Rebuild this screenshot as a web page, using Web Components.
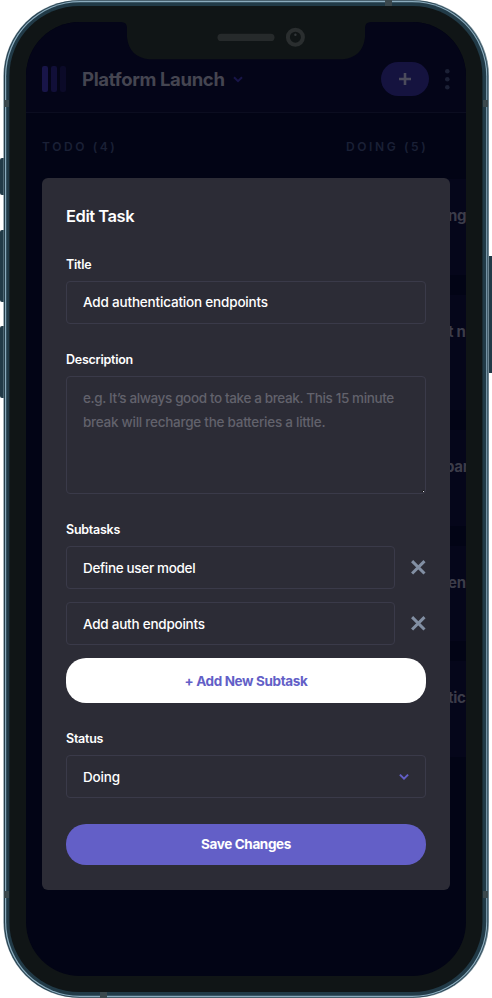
<!DOCTYPE html>
<html lang="en">
<head>
<meta charset="utf-8">
<title>Edit Task</title>
<style>
html,body{margin:0;background:#fff;overflow:hidden}
body{font-family:Inter,"Open Sans",sans-serif;-webkit-font-smoothing:antialiased}
</style>
</head>
<body>
<phone-frame>
  <app-header slot="app">Platform Launch</app-header>
  <board-columns slot="app">
    <board-column name="TODO (4)"></board-column>
    <board-column name="DOING (5)">
      <task-card h="96">ng</task-card>
      <task-card h="115">t n</task-card>
      <task-card h="96" style="padding-left:99px">par</task-card>
      <task-card h="95">en</task-card>
      <task-card h="96">tica</task-card>
    </board-column>
  </board-columns>
  <task-dialog slot="modal" heading="Edit Task">
    <form-field label="Title" style="margin-top:25.5px"><text-box style="letter-spacing:-.18px">Add authentication endpoints</text-box></form-field>
    <form-field label="Description" style="margin-top:27.5px"><text-box multiline><div style="letter-spacing:-.37px">e.g. It’s always good to take a break. This 15 minute</div><div style="letter-spacing:-.26px">break will recharge the batteries a little.</div></text-box></form-field>
    <form-field label="Subtasks" style="margin-top:27px">
      <subtask-row><text-box style="letter-spacing:-.33px">Define user model</text-box></subtask-row>
      <subtask-row><text-box style="letter-spacing:-.24px">Add auth endpoints</text-box></subtask-row>
      <pill-button style="--h:45px;--bg:#fff;--fg:#635fc7">+ Add New Subtask</pill-button>
    </form-field>
    <form-field label="Status" style="margin-top:27px"><text-box dropdown style="letter-spacing:-.15px">Doing</text-box></form-field>
    <pill-button style="margin-top:25.5px;--h:41px;--bg:#635fc7;--fg:#fff">Save Changes</pill-button>
  </task-dialog>
</phone-frame>
<script>
const define = (name, html, setup) => customElements.define(name, class extends HTMLElement {
  connectedCallback() {
    if (this.shadowRoot) return;
    const root = this.attachShadow({ mode: 'open' });
    const t = document.createElement('template');
    t.innerHTML = html;
    root.append(t.content.cloneNode(true));
    if (setup) setup(this, root);
  }
});

define('phone-frame', `
<style>
:host{display:block;position:relative;width:492px;height:998px;overflow:hidden}
svg{position:absolute;inset:0;display:block}
.screen{position:absolute;left:26px;top:22px;width:440px;height:954px;border-radius:54px;overflow:hidden;background:#020415}
.modal{position:absolute;left:16px;top:156px}
</style>
<svg width="492" height="998" viewBox="0 0 492 998">
  <g fill="#213a47">
    <rect x="0" y="158" width="8" height="37" rx="2"/>
    <rect x="0" y="230" width="8" height="72" rx="2"/>
    <rect x="0" y="326" width="8" height="72" rx="2"/>
    <rect x="484" y="256" width="12" height="117" rx="2"/>
  </g>
  <rect x="3.4" y="0" width="485.6" height="998" rx="76" fill="#6d8592"/>
  <rect x="4" y=".4" width="484" height="997.2" rx="75.5" fill="#243d4a"/>
  <rect x="5" y="1" width="482.3" height="996" rx="75" fill="#8aabbd"/>
  <rect x="6.2" y="2.2" width="480" height="993.6" rx="74" fill="#213a47"/>
  <g fill="#3b484d">
    <rect x="4" y="100" width="5" height="7"/><rect x="483" y="100" width="5" height="7"/>
    <rect x="4" y="891" width="5" height="7"/><rect x="483" y="891" width="5" height="7"/>
    <rect x="385" y="0" width="7" height="6"/><rect x="100" y="992" width="7" height="6"/>
  </g>
  <rect x="9.4" y="6" width="473" height="986" rx="70" fill="#101516"/>
</svg>
<div class="screen"><slot name="app"></slot><div class="modal"><slot name="modal"></slot></div></div>
<svg width="492" height="60" viewBox="0 0 492 60">
  <path fill="#101516" d="M121 20V22Q127 22 127 28V37Q129 57 149 59.3H343Q363 57 365 37V28Q365 22 371 22V20Z"/>
  <rect x="217.5" y="33.8" width="57" height="7.2" rx="3.6" fill="#262a2b"/>
  <circle cx="295.4" cy="37.2" r="7.5" fill="none" stroke="#2a2e2f" stroke-width="4"/>
  <circle cx="295.4" cy="34.8" r="1.2" fill="#33383a"/>
</svg>`);

define('app-header', `
<style>
:host{display:flex;box-sizing:border-box;height:91px;padding:24px 16px 0;align-items:center;background:#040518;border-bottom:1px solid #0b0d20;color:#454551}
.title{font-size:18.5px;font-weight:700;line-height:24px;letter-spacing:-.35px;margin-left:16px;white-space:nowrap}
.chev{margin-left:8px}
.add{margin-left:auto;width:48px;height:34px;border-radius:17px;background:#15133f;display:grid;place-items:center}
.dots{margin-left:16px}
svg{display:block}
</style>
<svg width="24" height="26"><rect width="6" height="26" rx="2" fill="#181548"/><rect x="9" width="6" height="26" rx="2" fill="#110f38"/><rect x="18" width="6" height="26" rx="2" fill="#0b0a28"/></svg>
<span class="title"><slot></slot></span>
<svg class="chev" width="10" height="7"><path d="M1 1.2l4 4 4-4" fill="none" stroke="#181548" stroke-width="2"/></svg>
<span class="add"><svg width="12" height="12"><path d="M6 0v12M0 6h12" stroke="#4c4b5c" stroke-width="2.6"/></svg></span>
<svg class="dots" width="5" height="21" fill="#1c2136"><circle cx="2.3" cy="2.3" r="2.3"/><circle cx="2.3" cy="10.3" r="2.3"/><circle cx="2.3" cy="18.3" r="2.3"/></svg>`);

define('board-columns', `
<style>:host{display:flex;gap:24px;padding:25px 16px 0}</style><slot></slot>`);

define('board-column', `
<style>
:host{display:flex;flex-direction:column;flex:0 0 280px;gap:20px}
.name{font-size:12px;font-weight:600;line-height:18px;letter-spacing:2.6px;color:#1a2036;white-space:nowrap;margin-bottom:3px}
</style>
<span class="name"></span><slot></slot>`, (el, r) => r.querySelector('.name').textContent = el.getAttribute('name'));

define('task-card', `
<style>
:host{display:block;box-sizing:border-box;padding:27px 0 0 102px;border-radius:8px;background:#05061a;color:#3c3c49;font-size:15px;font-weight:700;line-height:20px;letter-spacing:-.3px;white-space:nowrap}
</style><slot></slot>`, el => el.style.height = el.getAttribute('h') + 'px');

define('task-dialog', `
<style>
:host{display:flex;flex-direction:column;box-sizing:border-box;width:408px;height:712px;padding:24px;border-radius:6px;background:#2c2c36;color:#fff}
h2{margin:0;font-size:16.5px;font-weight:600;line-height:28px;letter-spacing:-.45px}
</style>
<h2></h2><slot></slot>`, (el, r) => r.querySelector('h2').textContent = el.getAttribute('heading'));

define('form-field', `
<style>
:host{display:flex;flex-direction:column}
.label{font-size:12.5px;font-weight:600;line-height:17px;letter-spacing:-.25px;margin-bottom:8px}
.body{display:flex;flex-direction:column;gap:13px}
</style>
<span class="label"></span><div class="body"><slot></slot></div>`, (el, r) => r.querySelector('.label').textContent = el.getAttribute('label'));

define('text-box', `
<style>
:host{display:flex;align-items:center;justify-content:space-between;box-sizing:border-box;flex:1;min-height:43px;padding:0 16px;border:1px solid #3a3a49;border-radius:4px;font-size:13.5px;font-weight:500;line-height:24px;white-space:nowrap}
:host([multiline]){display:block;position:relative;flex:none;height:118px;padding-top:9px;color:#62626c}
svg{display:none}
:host([dropdown]) .chev{display:block}
:host([multiline]) .grip{display:block;position:absolute;right:0;bottom:0}
</style>
<slot></slot>
<svg class="chev" width="10" height="8"><path d="M.9 1.6l4.1 4 4.1-4" fill="none" stroke="#635fc7" stroke-width="2"/></svg>
<svg class="grip" width="3" height="3"><path d="M0 2L2 0" stroke="#111"/><rect x="1" y="1" width="1" height="1" fill="#ddd"/></svg>`);

define('subtask-row', `
<style>
:host{display:flex;align-items:center;gap:16px}
svg{display:block;flex:none}
</style>
<slot></slot><svg width="15" height="15"><path d="M1.1 1.1l12.4 12.4M13.5 1.1L1.1 13.5" stroke="#828fa3" stroke-width="3"/></svg>`);

define('pill-button', `
<style>
:host{display:flex;align-items:center;justify-content:center;flex:none;height:var(--h);border-radius:20px;background:var(--bg);color:var(--fg);font-size:13.5px;font-weight:700;line-height:20px;letter-spacing:-.37px}
</style><slot></slot>`);
</script>
</body>
</html>
